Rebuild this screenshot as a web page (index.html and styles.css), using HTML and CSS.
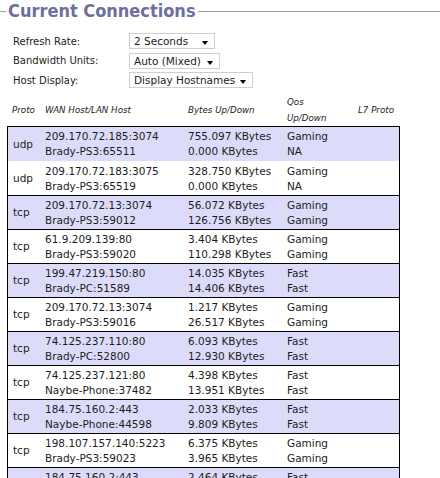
FILE: index.html
```html
<!DOCTYPE html>
<html>
<head>
<meta charset="utf-8">
<link rel="stylesheet" href="styles.css">
</head>
<body>
<div class="panel">
  <div class="legend"><span class="legend-text">Current Connections</span></div>
  <div class="settings">
    <div class="setting"><span class="label">Refresh Rate:</span><span class="select w1">2 Seconds</span></div>
    <div class="setting"><span class="label">Bandwidth Units:</span><span class="select w2">Auto (Mixed)</span></div>
    <div class="setting"><span class="label">Host Display:</span><span class="select w3">Display Hostnames</span></div>
  </div>
  <div class="thead">
    <div class="th">Proto</div>
    <div class="th">WAN Host/LAN Host</div>
    <div class="th">Bytes Up/Down</div>
    <div class="th">Qos<br>Up/Down</div>
    <div class="th">L7 Proto</div>
  </div>
  <div class="tbody">
    <div class="row odd first"><div class="proto">udp</div><div>209.170.72.185:3074<br>Brady-PS3:65511</div><div>755.097 KBytes<br>0.000 KBytes</div><div>Gaming<br>NA</div><div></div></div>
    <div class="row"><div class="proto">udp</div><div>209.170.72.183:3075<br>Brady-PS3:65519</div><div>328.750 KBytes<br>0.000 KBytes</div><div>Gaming<br>NA</div><div></div></div>
    <div class="row odd"><div class="proto">tcp</div><div>209.170.72.13:3074<br>Brady-PS3:59012</div><div>56.072 KBytes<br>126.756 KBytes</div><div>Gaming<br>Gaming</div><div></div></div>
    <div class="row"><div class="proto">tcp</div><div>61.9.209.139:80<br>Brady-PS3:59020</div><div>3.404 KBytes<br>110.298 KBytes</div><div>Gaming<br>Gaming</div><div></div></div>
    <div class="row odd"><div class="proto">tcp</div><div>199.47.219.150:80<br>Brady-PC:51589</div><div>14.035 KBytes<br>14.406 KBytes</div><div>Fast<br>Fast</div><div></div></div>
    <div class="row"><div class="proto">tcp</div><div>209.170.72.13:3074<br>Brady-PS3:59016</div><div>1.217 KBytes<br>26.517 KBytes</div><div>Gaming<br>Gaming</div><div></div></div>
    <div class="row odd"><div class="proto">tcp</div><div>74.125.237.110:80<br>Brady-PC:52800</div><div>6.093 KBytes<br>12.930 KBytes</div><div>Fast<br>Fast</div><div></div></div>
    <div class="row"><div class="proto">tcp</div><div>74.125.237.121:80<br>Naybe-Phone:37482</div><div>4.398 KBytes<br>13.951 KBytes</div><div>Fast<br>Fast</div><div></div></div>
    <div class="row odd"><div class="proto">tcp</div><div>184.75.160.2:443<br>Naybe-Phone:44598</div><div>2.033 KBytes<br>9.809 KBytes</div><div>Fast<br>Fast</div><div></div></div>
    <div class="row"><div class="proto">tcp</div><div>198.107.157.140:5223<br>Brady-PS3:59023</div><div>6.375 KBytes<br>3.965 KBytes</div><div>Gaming<br>Gaming</div><div></div></div>
    <div class="row odd"><div class="proto">tcp</div><div>184.75.160.2:443<br>Naybe-Phone:44601</div><div>2.464 KBytes<br>7.120 KBytes</div><div>Fast<br>Fast</div><div></div></div>
  </div>
</div>
</body>
</html>
```

FILE: styles.css
```css
html, body {
  margin: 0;
  padding: 0;
  background: #ffffff;
}
body {
  font-family: "DejaVu Sans", Verdana, sans-serif;
  font-size: 10.5px;
  color: #1c1c1c;
  width: 440px;
  height: 478px;
  overflow: hidden;
}
.legend {
  display: flex;
  align-items: center;
  height: 22px;
}
.legend::before {
  content: "";
  width: 6px;
  height: 1px;
  background: #9c9cae;
}
.legend::after {
  content: "";
  flex: 1;
  height: 1px;
  background: #9c9cae;
}
.legend-text {
  font-family: "DejaVu Sans Condensed", "DejaVu Sans", sans-serif;
  font-weight: bold;
  font-size: 18px;
  color: #6e6f9e;
  padding: 0 2px;
  line-height: 20px;
  margin-top: 0;
}
.settings {
  display: flex;
  flex-direction: column;
  gap: 3.5px;
  padding: 11px 0 0 13px;
}
.setting {
  display: flex;
  align-items: center;
  height: 16px;
}
.label {
  width: 116px;
  font-size: 10px;
}
.select {
  position: relative;
  box-sizing: border-box;
  height: 16px;
  border: 1px solid #cfcfcf;
  background: #fff;
  padding-left: 4px;
  line-height: 14px;
  font-size: 10.5px;
}
.select::after {
  content: "";
  position: absolute;
  right: 6px;
  top: 7px;
  border-left: 3.5px solid transparent;
  border-right: 3.5px solid transparent;
  border-top: 4px solid #000;
}
.w1 { width: 86px; }
.w2 { width: 91px; }
.w3 { width: 124px; }
.thead {
  display: grid;
  grid-template-columns: 33px 143px 99px 71px 1fr;
  width: 393px;
  margin: 6px 0 0 7px;
  height: 32px;
  align-items: center;
}
.th {
  font-style: italic;
  font-size: 8.7px;
  line-height: 16px;
  padding-left: 5px;
}
.tbody {
  width: 393px;
  margin-left: 7px;
  box-sizing: border-box;
  border: 1px solid #000;
  border-bottom: none;
}
.row {
  display: grid;
  grid-template-columns: 32px 143px 99px 71px 1fr;
  height: 34px;
  box-sizing: border-box;
  border-top: 1px solid #000;
  padding-top: 2px;
  line-height: 15px;
  background: #ffffff;
}
.row.first {
  border-top: none;
}
.row.first + .row {
  border-top: none;
  padding-top: 3px;
}
.row.odd {
  background: #dcdcfa;
}
.row > div {
  padding-left: 5px;
  white-space: nowrap;
}
.row > .proto {
  align-self: center;
  margin-top: -2px;
}
```
